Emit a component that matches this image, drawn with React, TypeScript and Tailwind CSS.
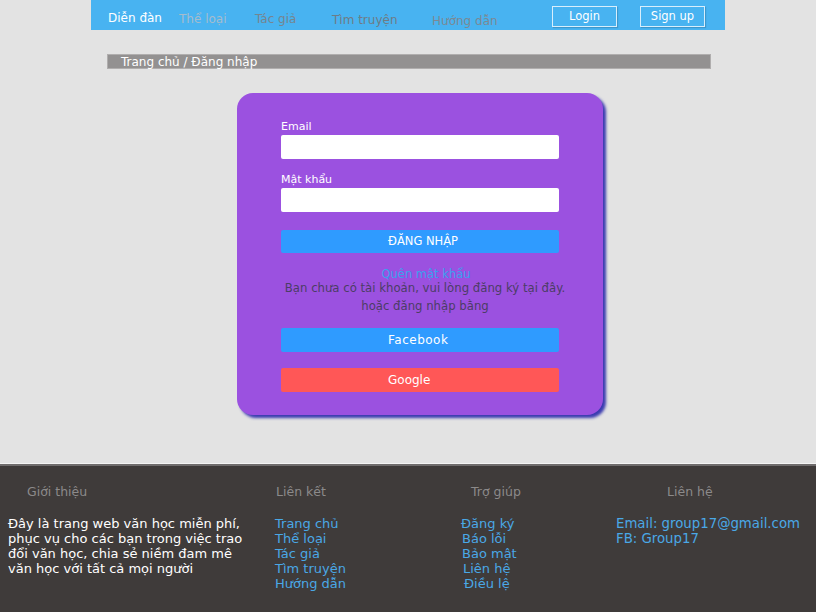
import React from "react";

export default function App() {
  const font = { fontFamily: "'DejaVu Sans', 'Liberation Sans', sans-serif" };
  return (
    <div className="w-[816px] h-[612px] bg-[#e3e3e3] flex flex-col overflow-hidden" style={font}>
      {/* header */}
      <div className="mx-[91px] h-[30px] bg-[#48b3f1] flex items-start text-[12px] relative">
        <span className="ml-[17px] w-[71px] mt-[9px] text-white">Diễn đàn</span>
        <span className="w-[76px] mt-[10px] text-[#a5bccd]">Thể loại</span>
        <span className="w-[77px] mt-[10px] text-[#76858f]">Tác giả</span>
        <span className="w-[100px] mt-[11px] text-[#6e7c86]">Tìm truyện</span>
        <span className="mt-[12px] text-[#7b8994]">Hướng dẫn</span>
        <div className="ml-auto mr-[20px] mt-[6px] flex gap-[23px]">
          <div className="w-[65px] h-[21px] border border-[#d8eefc] shadow-[1px_1px_1px_rgba(0,0,0,0.15)] flex items-center justify-center text-white text-[11.5px]">Login</div>
          <div className="w-[65px] h-[21px] border border-[#d8eefc] shadow-[1px_1px_1px_rgba(0,0,0,0.15)] flex items-center justify-center text-white text-[11.5px]">Sign up</div>
        </div>
      </div>

      {/* breadcrumb */}
      <div className="ml-[107px] w-[604px] mt-[24px] h-[15px] bg-[#939191] border border-[#b0aeae] flex items-center pl-[13px] text-white text-[12px]">
        Trang chủ / Đăng nhập
      </div>

      {/* card */}
      <div className="ml-[237px] mt-[24px] w-[366px] h-[322px] bg-[#9b51e0] rounded-[16px] shadow-[3px_3px_3px_#3a3ab0] px-[44px] pt-[25px] flex flex-col">
        <label className="h-[17px] text-white text-[11px] leading-[17px]">Email</label>
        <div className="h-[24px] bg-white rounded-[2px]" />
        <label className="mt-[12px] h-[17px] text-white text-[11px] leading-[17px]">Mật khẩu</label>
        <div className="h-[24px] bg-white rounded-[2px]" />
        <div className="mt-[18px] h-[23px] bg-[#2f9bff] rounded-[2px] flex items-center pl-[107px] text-white text-[11.5px]">ĐĂNG NHẬP</div>
        <div className="mt-[14px] h-[14px] leading-[14px] text-center text-[11.5px] text-[#3aa0ee] pl-[12px]">Quên mật khẩu</div>
        <div className="-mx-[20px] pl-[10px] h-[15px] leading-[15px] text-center text-[11.7px] text-[#4c3d66] whitespace-nowrap">Bạn chưa có tài khoản, vui lòng đăng ký tại đây.</div>
        <div className="mt-[3px] h-[15px] leading-[15px] text-center text-[11.7px] text-[#4c3d66] pl-[10px]">hoặc đăng nhập bằng</div>
        <div className="mt-[14px] h-[24px] bg-[#2f9bff] rounded-[2px] flex items-center pl-[107px] text-white text-[12px] tracking-[0.5px]">Facebook</div>
        <div className="mt-[16px] h-[24px] bg-[#ff5757] rounded-[2px] flex items-center pl-[107px] text-white text-[12px]">Google</div>
      </div>

      {/* footer */}
      <div className="mt-auto h-[149px] border-t border-[#f4f4f4] flex flex-col">
        <div className="flex-1 bg-[#3f3b3a] border-t-2 border-[#6f6c6c] flex">
          <div className="w-[275px] pl-[8px]">
            <div className="mt-[18px] pl-[19px] text-[12.5px] leading-[16px] text-[#8c8a8a]">Giới thiệu</div>
            <div className="mt-[16px] text-[13px] leading-[15px] text-white whitespace-nowrap">
              Đây là trang web văn học miễn phí,<br />phục vụ cho các bạn trong việc trao<br />đổi văn học, chia sẻ niềm đam mê<br />văn học với tất cả mọi người
            </div>
          </div>
          <div className="w-[186px]">
            <div className="mt-[18px] pl-[1px] text-[12.5px] leading-[16px] text-[#8c8a8a]">Liên kết</div>
            <div className="mt-[16px] flex flex-col text-[13px] leading-[15px] text-[#4aa8e6]">
              <span>Trang chủ</span>
              <span>Thể loại</span>
              <span>Tác giả</span>
              <span>Tìm truyện</span>
              <span>Hướng dẫn</span>
            </div>
          </div>
          <div className="w-[155px]">
            <div className="mt-[18px] pl-[10px] text-[12.5px] leading-[16px] text-[#8c8a8a]">Trợ giúp</div>
            <div className="mt-[16px] flex flex-col text-[13px] leading-[15px] text-[#4aa8e6]">
              <span>Đăng ký</span>
              <span className="pl-[1px]">Báo lỗi</span>
              <span className="pl-[1px]">Bảo mật</span>
              <span className="pl-[2px]">Liên hệ</span>
              <span className="pl-[3px]">Điều lệ</span>
            </div>
          </div>
          <div className="flex-1">
            <div className="mt-[18px] pl-[51px] text-[12.5px] leading-[16px] text-[#8c8a8a]">Liên hệ</div>
            <div className="mt-[16px] flex flex-col text-[13.3px] leading-[15px] text-[#4aa8e6]">
              <span>Email: group17@gmail.com</span>
              <span>FB: Group17</span>
            </div>
          </div>
        </div>
      </div>
    </div>
  );
}
